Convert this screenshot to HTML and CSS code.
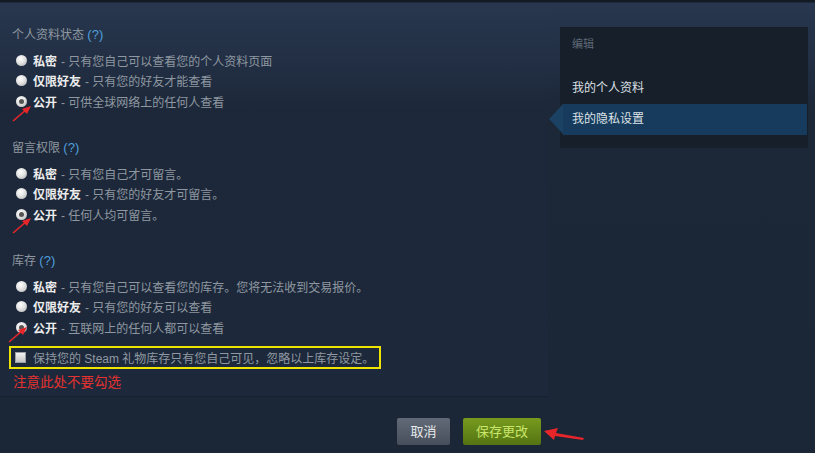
FILE: index.html
```html
<!DOCTYPE html>
<html lang="zh">
<head>
<meta charset="utf-8">
<link rel="stylesheet" href="styles.css">
</head>
<body>
<div class="page">
  <div class="main-col">
    <div class="panel">
      <div class="section">
        <div class="heading">个人资料状态 <span class="help">(?)</span></div>
        <div class="opt"><span class="radio"></span><b>私密</b><span class="desc">- 只有您自己可以查看您的个人资料页面</span></div>
        <div class="opt"><span class="radio"></span><b>仅限好友</b><span class="desc">- 只有您的好友才能查看</span></div>
        <div class="opt"><span class="radio on"></span><b>公开</b><span class="desc">- 可供全球网络上的任何人查看</span></div>
      </div>
      <div class="section">
        <div class="heading">留言权限 <span class="help">(?)</span></div>
        <div class="opt"><span class="radio"></span><b>私密</b><span class="desc">- 只有您自己才可留言。</span></div>
        <div class="opt"><span class="radio"></span><b>仅限好友</b><span class="desc">- 只有您的好友才可留言。</span></div>
        <div class="opt"><span class="radio on"></span><b>公开</b><span class="desc">- 任何人均可留言。</span></div>
      </div>
      <div class="section last">
        <div class="heading">库存 <span class="help">(?)</span></div>
        <div class="opt"><span class="radio"></span><b>私密</b><span class="desc">- 只有您自己可以查看您的库存。您将无法收到交易报价。</span></div>
        <div class="opt"><span class="radio"></span><b>仅限好友</b><span class="desc">- 只有您的好友可以查看</span></div>
        <div class="opt"><span class="radio on"></span><b>公开</b><span class="desc">- 互联网上的任何人都可以查看</span></div>
      </div>
      <div class="gift-box"><span class="check"></span><span class="gift-text">保持您的 Steam 礼物库存只有您自己可见，忽略以上库存设定。</span></div>
      <div class="note">注意此处不要勾选</div>
    </div>
    <div class="buttons">
      <div class="btn cancel">取消</div>
      <div class="btn save">保存更改</div>
    </div>
  </div>
  <div class="side">
    <div class="side-title">编辑</div>
    <div class="side-item first">我的个人资料</div>
    <div class="side-item active">我的隐私设置</div>
  </div>
</div>
<svg class="arrow a1" width="24" height="20" viewBox="0 0 24 20"><line x1="2" y1="17" x2="16" y2="5" stroke="#e8262a" stroke-width="1.6"/><polygon points="20,2 11,5 16,10" fill="#e8262a"/></svg>
<svg class="arrow a2" width="24" height="20" viewBox="0 0 24 20"><line x1="2" y1="17" x2="16" y2="5" stroke="#e8262a" stroke-width="1.6"/><polygon points="20,2 11,5 16,10" fill="#e8262a"/></svg>
<svg class="arrow a3" width="24" height="20" viewBox="0 0 24 20"><line x1="2" y1="17" x2="16" y2="5" stroke="#e8262a" stroke-width="1.6"/><polygon points="20,2 11,5 16,10" fill="#e8262a"/></svg>
<svg class="arrow a4" width="44" height="14" viewBox="0 0 44 14"><polygon points="1,3 15,0 13,5 41,10 40,12 12,8 11,12" fill="#e8262a"/></svg>
</body>
</html>
```
FILE: styles.css
```css
html, body {
  margin: 0;
  padding: 0;
}
body {
  width: 815px;
  height: 453px;
  overflow: hidden;
  background: linear-gradient(180deg, #131a24 0, #131a24 2px, #28374f 3px, #222f44 60px, #1c2738 110px, #1b2637 100%);
  font-family: "Liberation Sans", "Noto Sans CJK SC", sans-serif;
  font-size: 12px;
  position: relative;
}
.page {
  display: flex;
  align-items: flex-start;
}
.main-col {
  width: 548px;
  display: flex;
  flex-direction: column;
}
.panel {
  height: 396px;
  box-sizing: border-box;
  padding: 26px 0 0 12px;
  background: linear-gradient(180deg, rgba(255,255,255,0.0) 0, rgba(40,60,90,0.12) 100%);
  box-shadow: 0 1px 0 rgba(0,0,0,0.12);
}
.section {
  margin-bottom: 27.5px;
}
.section.last {
  margin-bottom: 0;
}
.heading {
  height: 18px;
  line-height: 18px;
  color: #8f98a0;
  margin-bottom: 6px;
}
.help {
  color: #4f9fdb;
  font-family: "Liberation Sans", sans-serif;
  font-size: 13px;
}
.opt {
  height: 20.5px;
  display: flex;
  align-items: center;
  padding-left: 4px;
  white-space: nowrap;
}
.opt b {
  color: #ececec;
  font-weight: bold;
}
.desc {
  color: #8f98a0;
  padding-left: 4px;
}
.radio {
  width: 11px;
  height: 11px;
  border-radius: 50%;
  background: radial-gradient(circle at 40% 35%, #ffffff 0, #e3e3e3 45%, #a8a8a8 100%);
  margin-right: 6px;
  flex: none;
  position: relative;
}
.radio.on::after {
  content: "";
  position: absolute;
  left: 3px;
  top: 3px;
  width: 5px;
  height: 5px;
  border-radius: 50%;
  background: #555;
}
.gift-box {
  margin-top: 8.5px;
  margin-left: -3px;
  width: 372px;
  height: 23px;
  box-sizing: border-box;
  border: 2px solid #efe400;
  display: flex;
  align-items: center;
  padding-left: 4px;
  white-space: nowrap;
}
.gift-text {
  color: #8f98a0;
}
.check {
  width: 9px;
  height: 9px;
  background: linear-gradient(180deg, #f2f2f2, #c4c4c4);
  border: 1px solid #9aa0a6;
  margin-right: 7px;
  flex: none;
}
.note {
  margin-top: 5px;
  margin-left: 1px;
  color: #e3322f;
  font-size: 13.5px;
  height: 18px;
  line-height: 18px;
}
.buttons {
  display: flex;
  justify-content: flex-end;
  gap: 13px;
  padding-right: 7px;
  margin-top: 22px;
}
.btn {
  height: 27px;
  line-height: 27px;
  border-radius: 2px;
  font-size: 13px;
  text-align: center;
}
.cancel {
  width: 53px;
  background: linear-gradient(180deg, #626a78 0, #474e5b 100%);
  color: #e6e8ea;
}
.save {
  width: 78px;
  background: linear-gradient(180deg, #779b1f 0, #547312 100%);
  color: #c9e56a;
}
.side {
  margin-left: 12px;
  margin-top: 27px;
  width: 248px;
  height: 121px;
  background: #171f2b;
  box-sizing: border-box;
  padding-top: 9px;
}
.side-title {
  color: #5f6a77;
  font-size: 11px;
  padding-left: 12px;
  height: 16px;
  line-height: 16px;
  margin-bottom: 26px;
}
.side-item {
  color: #dde1e5;
  padding-left: 12px;
  height: 31px;
  line-height: 31px;
  position: relative;
}
.side-item.first {
  height: 20px;
  line-height: 20px;
  margin-bottom: 6px;
}
.side-item.active {
  margin-left: 3px;
  margin-right: 1px;
  padding-left: 9px;
  background: #163b5c;
}
.side-item.active::before {
  content: "";
  position: absolute;
  left: -14px;
  top: 0;
  border-style: solid;
  border-width: 15.5px 14px 15.5px 0;
  border-color: transparent #1b4263 transparent transparent;
}
.arrow {
  position: absolute;
}
.a1 { left: 11px; top: 104px; }
.a2 { left: 11px; top: 216px; }
.a3 { left: 7px; top: 325px; }
.a4 { left: 543px; top: 428px; }
```
